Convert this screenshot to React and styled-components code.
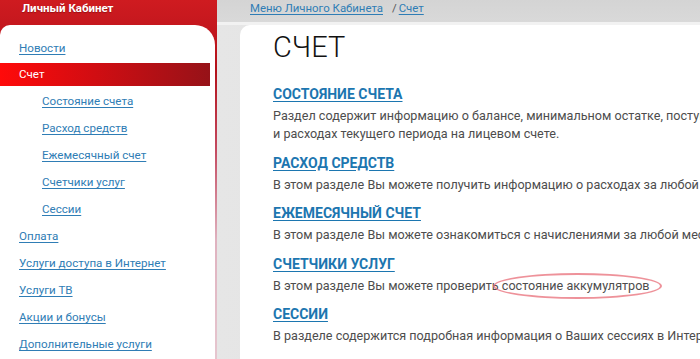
import React from "react";
import styled, { createGlobalStyle } from "styled-components";

const GlobalStyle = createGlobalStyle`
  html, body {
    margin: 0;
    padding: 0;
    background: #e3e3e3;
  }
  body {
    font-family: Roboto, "Liberation Sans", sans-serif;
  }
`;

const Page = styled.div`
  display: flex;
  flex-direction: row;
  width: 700px;
  height: 359px;
  overflow: hidden;
  background: #e3e3e3;
`;

const Sidebar = styled.div`
  display: flex;
  flex-direction: column;
  width: 217px;
  flex-shrink: 0;
  background: linear-gradient(
    to bottom,
    #cf1b20 0,
    #b3111a 70px,
    #c44a60 150px,
    #dfb2bf 240px,
    #e6c6cf 100%
  );
`;

const SideHeader = styled.div`
  height: 25px;
  box-sizing: border-box;
  padding: 1px 0 0 22px;
  color: #fff;
  font-size: 11.5px;
  font-weight: bold;
  line-height: 14px;
  text-shadow: 0 1px 1px rgba(80, 0, 0, 0.4);
`;

const SidePanel = styled.div`
  flex: 1;
  margin-right: 2px;
  padding-top: 10px;
  background: #fff;
  border-radius: 10px 20px 0 0;
  display: flex;
  flex-direction: column;
`;

const NavItem = styled.a`
  display: block;
  height: ${(p) => (p.$active ? "23px" : "27px")};
  line-height: ${(p) => (p.$active ? "23px" : "27px")};
  margin: ${(p) => (p.$active ? "1px 5px 2px 0" : "0")};
  padding-left: ${(p) => (p.$sub ? "42px" : "19px")};
  font-size: 11.6px;
  white-space: nowrap;
  color: ${(p) => (p.$active ? "#fff" : "#2f7db5")};
  text-decoration: ${(p) => (p.$active ? "none" : "underline")};
  text-underline-offset: 2px;
  background: ${(p) =>
    p.$active ? "linear-gradient(to right, #ff0a0a 0%, #d10d12 45%, #961218 100%)" : "none"};
`;

const Main = styled.div`
  flex: 1;
  display: flex;
  flex-direction: column;
  min-width: 0;
`;

const TopBar = styled.div`
  height: 25px;
  box-sizing: border-box;
  padding: 1px 0 0 33px;
  background: linear-gradient(to bottom, #d4d4d4, #d9d9d9);
  font-size: 11.4px;
  line-height: 14px;
  white-space: nowrap;
  border-bottom: 3px solid #f2f2f2;
`;

const Crumb = styled.a`
  color: #2f7db5;
  text-decoration: underline;
  text-underline-offset: 2px;
`;

const CrumbSep = styled.span`
  color: #555;
  margin: 0 2px 0 9px;
`;

const Body = styled.div`
  flex: 1;
  display: flex;
  padding-left: 23px;
  background: linear-gradient(to right, #e6e6e6, #dedede);
`;

const Content = styled.div`
  flex: 1;
  background: #fff;
  border-radius: 10px 0 0 0;
  padding: 4px 0 0 33px;
  overflow: hidden;
  white-space: nowrap;
`;

const Heading = styled.h1`
  margin: 0 0 19px;
  font-size: 29px;
  font-weight: 300;
  line-height: 36px;
  color: #111;
`;

const Section = styled.div`
  margin-bottom: 9.5px;
`;

const SectionTitle = styled.a`
  display: block;
  font-size: 14px;
  font-weight: bold;
  line-height: 20px;
  color: #1c76b0;
  text-decoration: underline;
  text-underline-offset: 2px;
  text-transform: uppercase;
`;

const Text = styled.p`
  margin: 3px 0 0;
  font-size: 12.6px;
  line-height: 18px;
  color: #4d4d4d;
`;

const Marked = styled.span`
  position: relative;

  &::after {
    content: "";
    position: absolute;
    left: -9px;
    right: -12px;
    top: -5px;
    bottom: -6px;
    border: 2.5px solid rgba(232, 110, 120, 0.75);
    border-radius: 50%;
    filter: blur(0.7px);
  }
`;

const nav = [
  { label: "Новости" },
  { label: "Счет", active: true },
  { label: "Состояние счета", sub: true },
  { label: "Расход средств", sub: true },
  { label: "Ежемесячный счет", sub: true },
  { label: "Счетчики услуг", sub: true },
  { label: "Сессии", sub: true },
  { label: "Оплата" },
  { label: "Услуги доступа в Интернет" },
  { label: "Услуги ТВ" },
  { label: "Акции и бонусы" },
  { label: "Дополнительные услуги" },
];

const App = () => {
  return (
    <Page>
      <GlobalStyle />
      <Sidebar>
        <SideHeader>Личный Кабинет</SideHeader>
        <SidePanel>
          {nav.map((item) => (
            <NavItem key={item.label} $active={item.active} $sub={item.sub}>
              {item.label}
            </NavItem>
          ))}
        </SidePanel>
      </Sidebar>

      <Main>
        <TopBar>
          <Crumb>Меню Личного Кабинета</Crumb>
          <CrumbSep>/</CrumbSep>
          <Crumb>Счет</Crumb>
        </TopBar>
        <Body>
          <Content>
            <Heading>СЧЕТ</Heading>

            <Section>
              <SectionTitle>Состояние счета</SectionTitle>
              <Text>
                Раздел содержит информацию о балансе, минимальном остатке, поступлениях
                <br />
                и расходах текущего периода на лицевом счете.
              </Text>
            </Section>

            <Section>
              <SectionTitle>Расход средств</SectionTitle>
              <Text>В этом разделе Вы можете получить информацию о расходах за любой период</Text>
            </Section>

            <Section>
              <SectionTitle>Ежемесячный счет</SectionTitle>
              <Text>В этом разделе Вы можете ознакомиться с начислениями за любой месяц</Text>
            </Section>

            <Section>
              <SectionTitle>Счетчики услуг</SectionTitle>
              <Text>
                В этом разделе Вы можете проверить <Marked>состояние аккумулятров</Marked>
              </Text>
            </Section>

            <Section>
              <SectionTitle>Сессии</SectionTitle>
              <Text>В разделе содержится подробная информация о Ваших сессиях в Интернете</Text>
            </Section>
          </Content>
        </Body>
      </Main>
    </Page>
  );
};

export default App;
